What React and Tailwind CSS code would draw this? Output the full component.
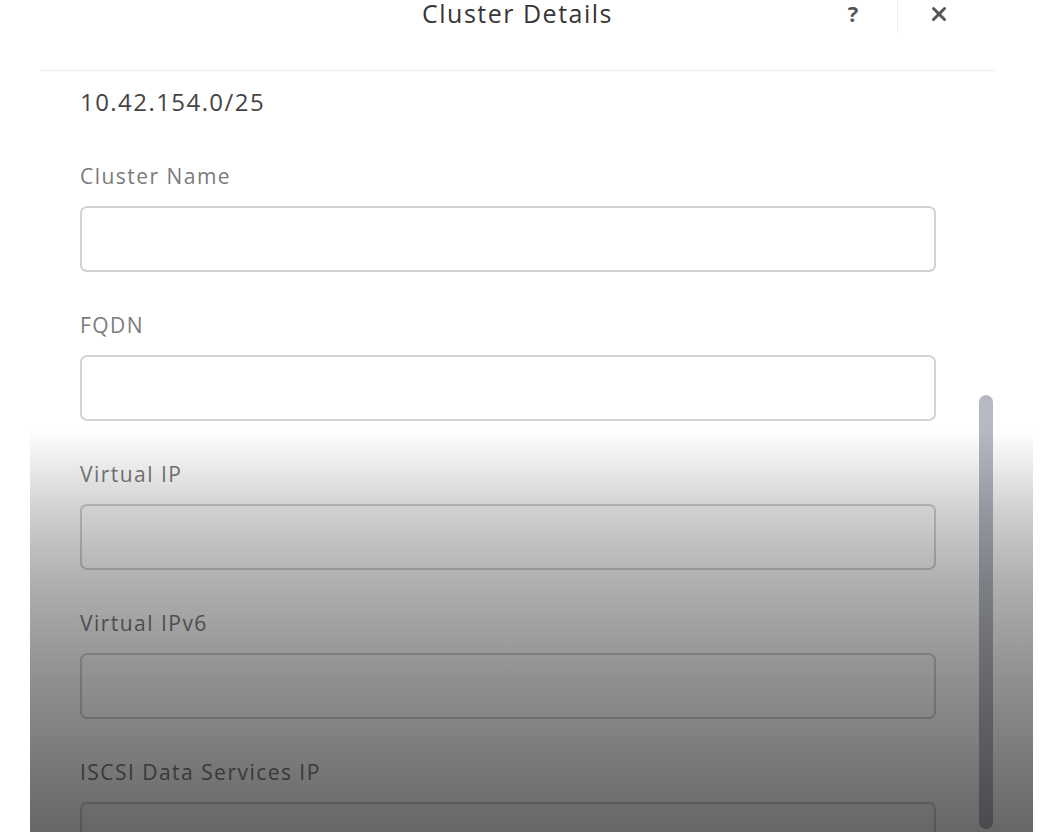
import React from 'react';
import { X } from 'lucide-react';

const fields = [
  { label: 'Cluster Name', disabled: false },
  { label: 'FQDN', disabled: false },
  { label: 'Virtual IP', disabled: true },
  { label: 'Virtual IPv6', disabled: true },
  { label: 'ISCSI Data Services IP', disabled: true },
];

const Field = ({ label }) => (
  <div className="flex flex-col">
    <label className="text-[21px] leading-[24px] tracking-[0.07em] text-[#7b7b7b]">{label}</label>
    <div className="mt-[18px] h-[66px] w-[856px] rounded-[7px] border-2 border-[#d2d2d2] bg-white"></div>
  </div>
);

const App = () => {
  return (
    <div
      className="h-[832px] w-[1057px] overflow-hidden bg-white"
      style={{ fontFamily: '"Open Sans", Lato, sans-serif' }}
    >
      <div className="relative ml-[30px] h-[832px] w-[1003px] overflow-hidden bg-white">
        {/* Header */}
        <div className="ml-[10px] mr-[38px] h-[71px] border-b border-[#ededed]">
          <div className="relative flex h-[26px] items-center justify-center">
            <h1 className="text-[25px] leading-[28px] tracking-[0.06em] text-[#363636]">Cluster Details</h1>
            <div className="absolute right-0 top-0 flex h-[34px] items-start">
              <span className="w-[24px] text-center text-[22px] font-bold leading-[26px] text-[#555]">?</span>
              <div className="ml-[32px] h-[34px] w-px bg-[#f0f0f0]"></div>
              <button className="ml-[30px] mr-[45px] mt-[3px] text-[#555]">
                <X className="h-[22px] w-[22px]" strokeWidth={3.2} />
              </button>
            </div>
          </div>
        </div>

        {/* Body */}
        <div className="pl-[50px] pt-[15px]">
          <p className="text-[24px] leading-[32px] tracking-[0.06em] text-[#444]">10.42.154.0/25</p>
          <div className="mt-[46px] flex flex-col gap-[41px]">
            {fields.map((f) => (
              <Field key={f.label} label={f.label} />
            ))}
          </div>
        </div>

        {/* Scrollbar */}
        <div className="absolute left-[949px] top-[395px] h-[434px] w-[14px] rounded-full bg-[#b6b9c3]"></div>

        {/* Dim overlay */}
        <div className="pointer-events-none absolute inset-x-0 top-[430px] bottom-0 bg-[linear-gradient(to_bottom,rgba(0,0,0,0)_0px,rgba(0,0,0,0.19)_83px,rgba(0,0,0,0.31)_150px,rgba(0,0,0,0.44)_250px,rgba(0,0,0,0.6)_100%)]"></div>
      </div>
    </div>
  );
};

export default App;
